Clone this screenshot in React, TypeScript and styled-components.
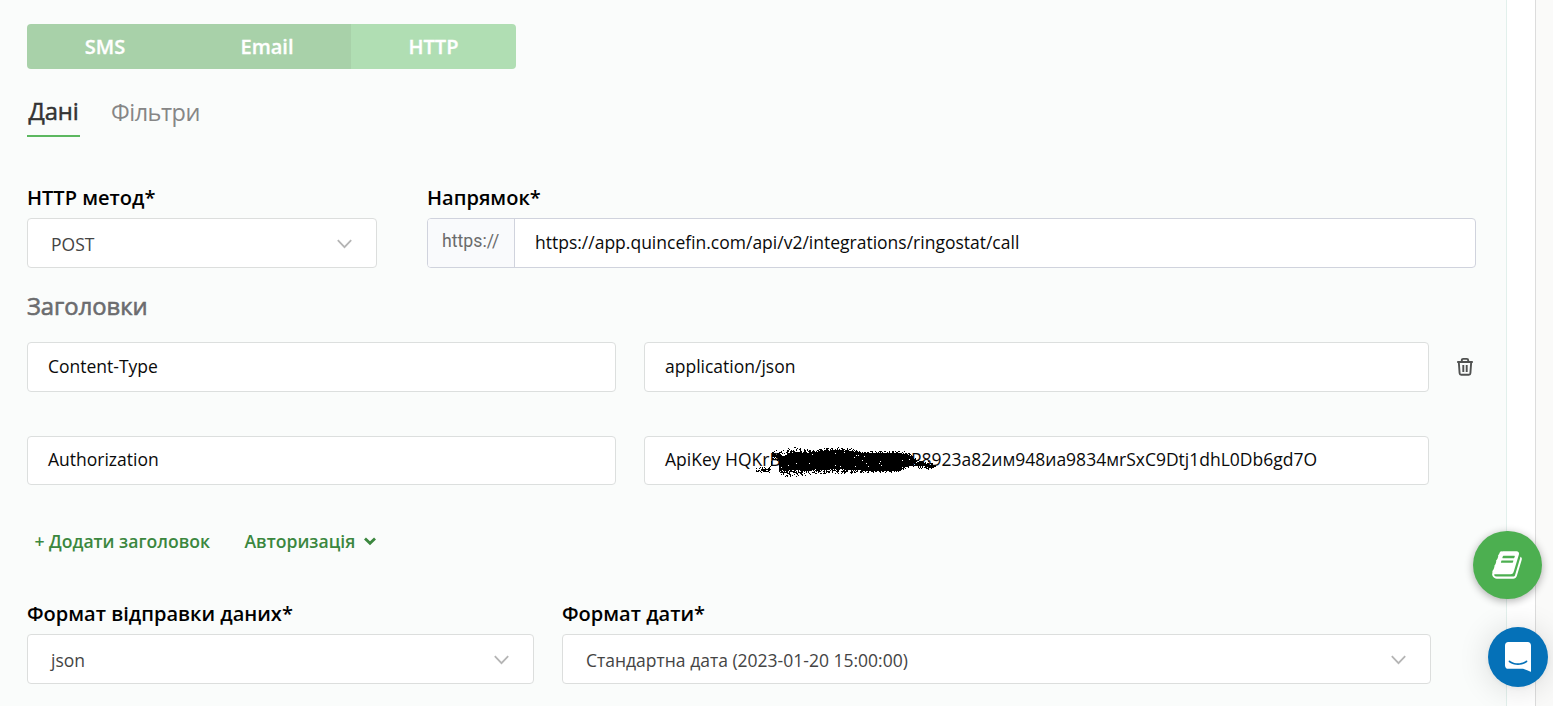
import React from "react";
import styled, { createGlobalStyle } from "styled-components";

const GlobalStyle = createGlobalStyle`
  * { box-sizing: border-box; }
  body {
    margin: 0;
    overflow: hidden;
    background: #fafaf9;
    font-family: "Open Sans", "Noto Sans", sans-serif;
    color: #0a0a0a;
  }
  button { font-family: inherit; border: 0; background: none; padding: 0; cursor: pointer; }
`;

const Page = styled.div`
  width: 1536px;
  height: 706px;
  background: #fff;
  border-right: 1px solid #dcdcdc;
`;

const Panel = styled.main`
  display: flex;
  flex-direction: column;
  width: 1507px;
  height: 706px;
  padding: 24px 0 0 27px;
  background: #fafcfb;
  border-right: 1px solid #e2f0ec;
`;

const Segments = styled.div`
  display: flex;
  width: 489px;
  height: 45px;
  border-radius: 4px;
  overflow: hidden;
`;

const Segment = styled.button<{ $width: number; $active?: boolean }>`
  width: ${(p) => p.$width}px;
  background: ${(p) => (p.$active ? "#b0deb3" : "#a8d1a9")};
  color: #fff;
  font-size: 20px;
  font-weight: 600;
  -webkit-text-stroke: 0.3px #fff;
`;

const Tabs = styled.nav`
  display: flex;
  gap: 31px;
  height: 45px;
  margin-top: 23px;
`;

const Tab = styled.button<{ $active?: boolean }>`
  display: flex;
  align-items: flex-start;
  height: 45px;
  width: ${(p) => (p.$active ? "53px" : "auto")};
  padding: ${(p) => (p.$active ? "3px 0 0 1.5px" : "4px 0 0")};
  border-bottom: 2px solid ${(p) => (p.$active ? "#5cb860" : "transparent")};
  color: ${(p) => (p.$active ? "#333" : "#868686")};
  font-size: ${(p) => (p.$active ? 23.8 : 23.5)}px;
  letter-spacing: ${(p) => (p.$active ? -0.1 : -0.5)}px;
  -webkit-text-stroke: ${(p) => (p.$active ? "0.5px #333" : "0")};
  font-weight: 400;
  line-height: 32px;
  white-space: nowrap;
`;

const Row = styled.div<{ $gap: number; $top: number }>`
  display: flex;
  align-items: center;
  gap: ${(p) => p.$gap}px;
  margin-top: ${(p) => p.$top}px;
`;

const Field = styled.div<{ $width: number }>`
  display: flex;
  flex-direction: column;
  width: ${(p) => p.$width}px;
`;

const Label = styled.label`
  height: 34px;
  color: #000;
  font-size: 20.05px;
  font-weight: 600;
  line-height: 28px;
  white-space: nowrap;
`;

const SelectBox = styled.div`
  display: flex;
  align-items: center;
  justify-content: space-between;
  height: 50px;
  padding: 2px 23px 0;
  background: #fff;
  border: 1px solid #dcdedd;
  border-radius: 4px;
  color: #444;
  font-size: 17.5px;
  white-space: nowrap;
`;

const UrlGroup = styled.div`
  display: flex;
  height: 50px;
  background: #fff;
  border: 1px solid #d0d3dd;
  border-radius: 4px;
  overflow: hidden;
`;

const Prefix = styled.span`
  width: 87px;
  padding-left: 14px;
  background: #f9fafc;
  border-right: 1px solid #d0d3dd;
  color: #6b6b6b;
  font-family: Roboto, sans-serif;
  font-size: 17.7px;
  line-height: 44px;
`;

const UrlText = styled.span`
  padding-left: 20px;
  font-size: 17.5px;
  line-height: 47px;
`;

const SectionTitle = styled.h2`
  margin: 21px 0 0;
  height: 35px;
  color: #6b6c6e;
  font-size: 23.8px;
  font-weight: 400;
  -webkit-text-stroke: 0.6px #6b6c6e;
  line-height: 34px;
`;

const TextBox = styled.div<{ $width: number; $height: number }>`
  position: relative;
  display: flex;
  width: ${(p) => p.$width}px;
  height: ${(p) => p.$height}px;
  padding-left: 20px;
  background: #fff;
  border: 1px solid #dcdfde;
  border-radius: 4px;
  font-size: 17.5px;
  line-height: ${(p) => (p.$height === 49 ? 45 : 47)}px;
  white-space: nowrap;
`;

const KeyStart = styled.span`
  width: 246px;
`;

const Smudge = styled.svg`
  position: absolute;
  left: 111px;
  top: 9px;
`;

const IconButton = styled.button`
  display: flex;
  margin-left: -1px;
`;

const LinkButton = styled.button`
  display: flex;
  align-items: center;
  gap: 9px;
  height: 26px;
  color: #3b873e;
  font-size: 17.6px;
  font-weight: 600;
  white-space: nowrap;
`;

const Actions = styled(Row)`
  padding-left: 7.4px;
`;

const RoundButton = styled.button<{ $size: number; $right: number; $top: number; $color: string; $shadow: string }>`
  position: fixed;
  top: ${(p) => p.$top}px;
  right: ${(p) => p.$right}px;
  display: flex;
  align-items: center;
  justify-content: center;
  width: ${(p) => p.$size}px;
  height: ${(p) => p.$size}px;
  border-radius: 50%;
  background: ${(p) => p.$color};
  box-shadow: ${(p) => p.$shadow};
`;

const Chevron = () => (
  <svg width="17" height="10" viewBox="0 0 17 10" fill="none" stroke="#b5b5b5" strokeWidth="1.8">
    <path d="M1.8 1.2 8.5 8.2 15.2 1.2" />
  </svg>
);

const Caret = () => (
  <svg width="12" height="9" viewBox="0 0 12 9" fill="none" stroke="#3b873e" strokeWidth="2.8">
    <path d="M1 1.4 6 6.2 11 1.4" />
  </svg>
);

const Trash = () => (
  <svg width="18" height="20" viewBox="0 0 18 20" fill="none" stroke="#505251" strokeWidth="1.9">
    <path d="M1.2 5h15.6M5.8 5V3.2Q5.8 1.9 7.2 1.9h3.6q1.4 0 1.4 1.3V5M2.8 5l.8 11.2q.1 1.6 1.6 1.6h7.6q1.5 0 1.6-1.6L15.2 5M7.3 8v7M10.7 8v7" />
  </svg>
);

const Book = () => (
  <svg width="32" height="32" viewBox="0 0 1792 1792" fill="#fff">
    <path d="M1703 478q40 57 18 129l-275 906q-19 64-76.5 107.5t-122.5 43.5h-923q-77 0-148.5-53.5t-99.5-131.5q-24-67-2-127 0-4 3-27t4-37q1-8-3-21.5t-3-19.5q2-11 8-21t16.5-23.5 16.5-23.5q23-38 45-91.5t30-91.5q3-10 .5-30t-.5-28q3-11 17-28t17-23q21-36 42-92t25-90q1-9-2.5-32t.5-28q4-13 22-30.5t22-22.5q19-26 42.5-84.5t27.5-96.5q1-8-3-25.5t-2-26.5q2-8 9-18t18-23 17-21q8-12 16.5-30.5t15-35 16-36 19.5-32 26.5-23.5 36-11.5 47.5 5.5l-1 3q38-9 51-9h761q74 0 114 56t18 130l-274 906q-36 119-71.5 153.5t-128.5 34.5h-869q-27 0-38 15-11 16-1 43 24 70 144 70h923q29 0 56-15.5t35-41.5l300-987q7-22 5-57 38 15 59 43zm-1064 2q-4 13 2 22.5t20 9.5h608q13 0 25.5-9.5t16.5-22.5l21-64q4-13-2-22.5t-20-9.5h-608q-13 0-25.5 9.5t-16.5 22.5zm-83 256q-4 13 2 22.5t20 9.5h608q13 0 25.5-9.5t16.5-22.5l21-64q4-13-2-22.5t-20-9.5h-608q-13 0-25.5 9.5t-16.5 22.5z" />
  </svg>
);

const Messenger = () => (
  <svg width="26" height="30" viewBox="0 0 28 32" fill="#fff" preserveAspectRatio="none">
    <path d="M28 32s-4.714-1.855-8.527-3.34H3.437C1.54 28.66 0 27.026 0 25.013V3.644C0 1.633 1.54 0 3.437 0h21.125c1.898 0 3.437 1.632 3.437 3.645v18.404H28V32zm-4.139-11.982a.88.88 0 00-1.292-.105c-.03.026-3.015 2.681-8.57 2.681-5.486 0-8.517-2.636-8.571-2.684a.88.88 0 00-1.29.107 1.01 1.01 0 00-.219.708.992.992 0 00.318.664c.142.128 3.537 3.15 9.762 3.15 6.226 0 9.621-3.022 9.763-3.15a.992.992 0 00.317-.664 1.01 1.01 0 00-.218-.707z" />
  </svg>
);

/* Spray outline: x, outer top, solid top, solid bottom, outer bottom. */
const spray = [
  [0, 22, 26, 25, 27],
  [14, 19, 25, 24, 26],
  [16, 5, 9, 9, 13],
  [22, 4, 8, 12, 15],
  [23, 4, 9, 23, 29],
  [28, 4, 10, 24, 30],
  [35, 0, 6, 23, 31],
  [50, 3, 7, 24, 29],
  [70, 2, 4, 23, 27],
  [82, 1, 4, 22, 29],
  [96, 2, 5, 23, 27],
  [106, 5, 7, 24, 26],
  [140, 5, 7, 24, 26],
  [150, 5, 8, 20, 22],
  [156, 9, 11, 18, 20],
  [162, 14, 16, 19, 22],
  [172, 15, 18, 20, 23],
  [180, 19, 20, 20, 21],
];

function sprayPath() {
  let seed = 7;
  const rand = () => {
    seed = (seed * 16807) % 2147483647;
    return seed / 2147483647;
  };
  let d = "";
  for (let i = 0; i < spray.length - 1; i++) {
    const a = spray[i];
    const b = spray[i + 1];
    for (let x = a[0]; x < b[0]; x++) {
      const t = (x - a[0]) / (b[0] - a[0]);
      const [ot, st, sb, ob] = [1, 2, 3, 4].map((k) => a[k] + (b[k] - a[k]) * t);
      for (let y = Math.round(ot); y <= ob; y++) {
        const density = y < st ? (y - ot + 1) / (st - ot + 1) : y > sb ? (ob - y + 1) / (ob - sb + 1) : 1;
        if (rand() < (density > 0.95 ? 0.985 : density * 0.8)) d += `M${x} ${y}h1v1h-1z`;
      }
    }
  }
  return d;
}
const smudgePath = sprayPath();

export default function App() {
  return (
    <>
      <GlobalStyle />
      <Page>
        <Panel>
          <Segments>
            <Segment $width={156}>SMS</Segment>
            <Segment $width={168}>Email</Segment>
            <Segment $width={165} $active>HTTP</Segment>
          </Segments>
          <Tabs>
            <Tab $active>Дані</Tab>
            <Tab>Фільтри</Tab>
          </Tabs>
          <Row $gap={50} $top={47}>
            <Field $width={350}>
              <Label>HTTP метод*</Label>
              <SelectBox>POST<Chevron /></SelectBox>
            </Field>
            <Field $width={1049}>
              <Label>Напрямок*</Label>
              <UrlGroup>
                <Prefix>https://</Prefix>
                <UrlText>https://app.quincefin.com/api/v2/integrations/ringostat/call</UrlText>
              </UrlGroup>
            </Field>
          </Row>
          <SectionTitle>Заголовки</SectionTitle>
          <Row $gap={28} $top={18}>
            <TextBox $width={589} $height={50}>Content-Type</TextBox>
            <TextBox $width={785} $height={50}>application/json</TextBox>
            <IconButton aria-label="Видалити"><Trash /></IconButton>
          </Row>
          <Row $gap={28} $top={44}>
            <TextBox $width={589} $height={49}>Authorization</TextBox>
            <TextBox $width={785} $height={49}>
              <KeyStart>ApiKey HQKrB</KeyStart>
              <span>P8923a82им948иа9834мrSxC9Dtj1dhL0Db6gd7O</span>
              <Smudge width="182" height="36" shapeRendering="crispEdges"><path d={smudgePath} /></Smudge>
            </TextBox>
          </Row>
          <Actions $gap={34.5} $top={43}>
            <LinkButton>+ Додати заголовок</LinkButton>
            <LinkButton>Авторизація<Caret /></LinkButton>
          </Actions>
          <Row $gap={28} $top={46}>
            <Field $width={507}>
              <Label>Формат відправки даних*</Label>
              <SelectBox>json<Chevron /></SelectBox>
            </Field>
            <Field $width={869}>
              <Label>Формат дати*</Label>
              <SelectBox>Стандартна дата (2023-01-20 15:00:00)<Chevron /></SelectBox>
            </Field>
          </Row>
        </Panel>
      </Page>
      <RoundButton aria-label="Довідка" $size={68.5} $right={11.5} $top={530.7} $color="#4caf50" $shadow="0 2px 8px rgba(0,0,0,.32)">
        <Book />
      </RoundButton>
      <RoundButton aria-label="Чат" $size={60} $right={5} $top={627} $color="#0571b8" $shadow="0 1px 6px rgba(0,0,0,.06), 0 2px 32px rgba(0,0,0,.14)">
        <Messenger />
      </RoundButton>
    </>
  );
}
